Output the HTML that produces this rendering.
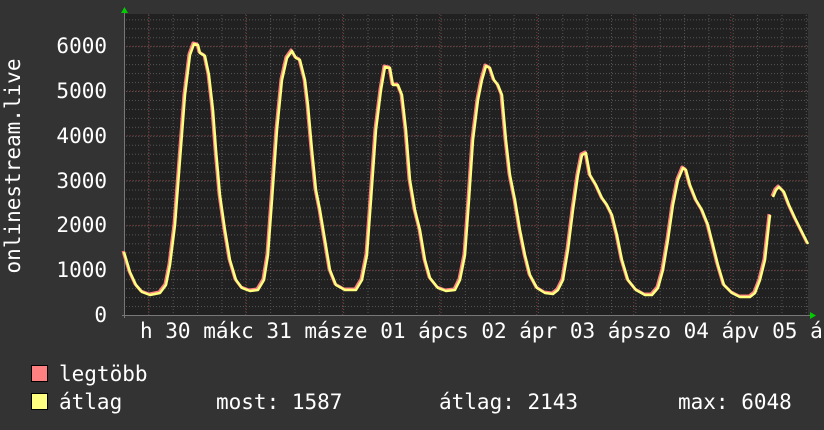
<!DOCTYPE html><html><head><meta charset="utf-8"><style>
body{margin:0;width:824px;height:430px;background:#333;overflow:hidden;font-family:"DejaVu Sans Mono","Liberation Mono",monospace;color:#fff}
svg{position:absolute;left:0;top:0}
text{font-family:"DejaVu Sans Mono","Liberation Mono",monospace;font-size:21px;fill:#fff}
</style></head><body>
<svg width="824" height="430">
<defs>
<pattern id="vmin" x="124" y="0" width="24.35" height="430" patternUnits="userSpaceOnUse"><line x1="0.5" y1="0" x2="0.5" y2="430" stroke="#555" stroke-dasharray="1,2"/></pattern>
<pattern id="hmin" x="0" y="315" width="824" height="8.96" patternUnits="userSpaceOnUse"><line x1="0" y1="0.5" x2="824" y2="0.5" stroke="#555" stroke-dasharray="1,2"/></pattern>
</defs>
<rect x="124" y="14" width="684" height="301" fill="#212121"/>
<rect x="124" y="14" width="684" height="301" fill="url(#vmin)"/>
<rect x="124" y="14" width="684" height="301" fill="url(#hmin)"/>
<g stroke="#7a3535" stroke-dasharray="1,2">
<line x1="148.7" y1="14" x2="148.7" y2="315"/><line x1="245.7" y1="14" x2="245.7" y2="315"/><line x1="342.7" y1="14" x2="342.7" y2="315"/><line x1="439.7" y1="14" x2="439.7" y2="315"/><line x1="536.7" y1="14" x2="536.7" y2="315"/><line x1="633.7" y1="14" x2="633.7" y2="315"/><line x1="730.7" y1="14" x2="730.7" y2="315"/>
<line x1="124" y1="46.2" x2="808" y2="46.2"/><line x1="124" y1="91" x2="808" y2="91"/><line x1="124" y1="135.8" x2="808" y2="135.8"/><line x1="124" y1="180.6" x2="808" y2="180.6"/><line x1="124" y1="225.4" x2="808" y2="225.4"/><line x1="124" y1="270.2" x2="808" y2="270.2"/>
</g>
<line x1="122" y1="315.5" x2="812" y2="315.5" stroke="#777"/>
<line x1="124.5" y1="12" x2="124.5" y2="318" stroke="#777"/>
<polygon points="121,13 124.5,7 128,13" fill="#0c0"/>
<polygon points="810,312 816,315.5 810,319" fill="#0c0"/>
<g fill="none" stroke-linejoin="round">
<polyline stroke="#ff8080" stroke-width="3" transform="translate(-1,-1)" points="124,252 130,272 136,285 142,292 150,295 160,293 166,285 170,265 175,225 180,160 185,95 190,55 194,44 198,45 200,53 205,56 209,75 213,110 216,150 220,195 225,230 230,260 236,280 242,288 250,291 258,290 264,280 268,255 272,200 277,130 282,80 287,58 292,51 296,58 300,60 305,80 308,105 312,150 316,190 320,210 325,240 330,270 336,285 345,290 356,290 362,280 367,255 371,200 376,130 381,90 385,67 390,68 393,85 398,85 402,95 406,130 410,180 415,210 420,230 425,260 430,278 438,288 446,291 455,290 460,280 465,255 469,200 473,140 478,100 482,80 486,66 490,68 494,80 498,85 502,95 506,140 510,175 515,200 520,230 525,255 530,275 537,288 545,293 553,294 558,290 563,280 568,250 573,210 578,175 582,155 586,153 590,175 596,185 602,198 607,205 612,215 617,235 622,260 628,280 636,290 645,295 652,295 658,288 663,270 668,240 673,205 678,180 683,168 686,170 690,185 696,200 702,210 708,225 713,245 718,265 724,285 732,293 740,297 750,297 755,293 760,280 765,260 770,215"/>
<polyline stroke="#ffff80" stroke-width="2.5" points="124,252 130,272 136,285 142,292 150,295 160,293 166,285 170,265 175,225 180,160 185,95 190,55 194,44 198,45 200,53 205,56 209,75 213,110 216,150 220,195 225,230 230,260 236,280 242,288 250,291 258,290 264,280 268,255 272,200 277,130 282,80 287,58 292,51 296,58 300,60 305,80 308,105 312,150 316,190 320,210 325,240 330,270 336,285 345,290 356,290 362,280 367,255 371,200 376,130 381,90 385,67 390,68 393,85 398,85 402,95 406,130 410,180 415,210 420,230 425,260 430,278 438,288 446,291 455,290 460,280 465,255 469,200 473,140 478,100 482,80 486,66 490,68 494,80 498,85 502,95 506,140 510,175 515,200 520,230 525,255 530,275 537,288 545,293 553,294 558,290 563,280 568,250 573,210 578,175 582,155 586,153 590,175 596,185 602,198 607,205 612,215 617,235 622,260 628,280 636,290 645,295 652,295 658,288 663,270 668,240 673,205 678,180 683,168 686,170 690,185 696,200 702,210 708,225 713,245 718,265 724,285 732,293 740,297 750,297 755,293 760,280 765,260 770,215"/>
<polyline stroke="#ff8080" stroke-width="3" transform="translate(-1,-1)" points="773,197 776,190 779,187 784,192 789,205 795,218 802,232 808,244"/>
<polyline stroke="#ffff80" stroke-width="2.5" points="773,197 776,190 779,187 784,192 789,205 795,218 802,232 808,244"/>
</g>
<g text-anchor="end">
<text x="107" y="53">6000</text><text x="107" y="98">5000</text><text x="107" y="143">4000</text><text x="107" y="188">3000</text><text x="107" y="232">2000</text><text x="107" y="277">1000</text><text x="107" y="322">0</text>
</g>
<text transform="translate(20,166) rotate(-90)" text-anchor="middle">onlinestream.live</text>
<text x="140" y="338" xml:space="preserve">h 30 mákc 31 másze 01 ápcs 02 ápr 03 ápszo 04 ápv 05 áp</text>
<rect x="31.5" y="365.5" width="16" height="16" fill="#ff8080" stroke="#000"/>
<rect x="31.5" y="393.5" width="16" height="16" fill="#ffff80" stroke="#000"/>
<text x="59" y="381">legtöbb</text>
<text x="59" y="409">átlag</text>
<text x="216" y="409">most: 1587</text>
<text x="439" y="409">átlag: 2143</text>
<text x="678" y="409">max: 6048</text>
</svg>
</body></html>
